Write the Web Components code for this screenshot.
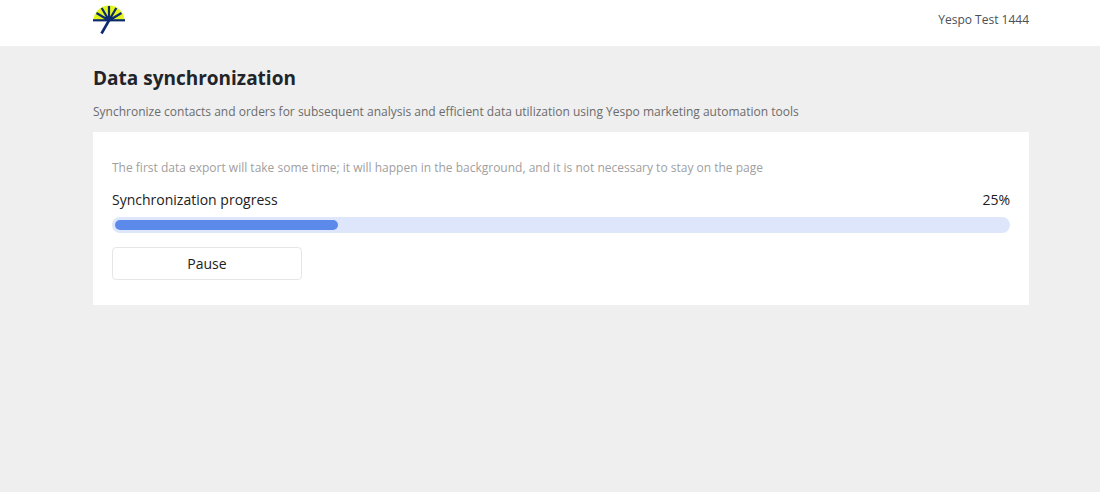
<!DOCTYPE html>
<html lang="en">
<head>
<meta charset="utf-8">
<title>Data synchronization</title>
<style>
  body {
    margin: 0;
    background: #efefef;
    color: #212529;
    font: 12px/20px "Open Sans", "Noto Sans", sans-serif;
  }
</style>
</head>
<body>
<sync-page>
  <app-header slot="header">Yespo Test 1444</app-header>
  <page-intro>
    <span slot="title">Data synchronization</span>
    Synchronize contacts and orders for subsequent analysis and efficient data utilization using Yespo marketing automation tools
  </page-intro>
  <sync-card value="25">
    <span slot="note">The first data export will take some time; it will happen in the background, and it is not necessary to stay on the page</span>
    <span slot="label">Synchronization progress</span>
    <sync-button>Pause</sync-button>
  </sync-card>
</sync-page>
<script>
  function define(name, html, ready) {
    const template = document.createElement('template');
    template.innerHTML = html;
    customElements.define(name, class extends HTMLElement {
      constructor() {
        super();
        this.attachShadow({ mode: 'open' }).append(template.content.cloneNode(true));
      }
      connectedCallback() {
        if (ready) ready(this);
      }
    });
  }

  define('yespo-logo', `
    <style>
      :host { display: block; width: 32px; height: 30px; }
      svg { display: block; }
    </style>
    <svg width="32" height="30" viewBox="0 0 32 30" role="img" aria-label="Yespo">
      <path d="M0.5 15.5A15.5 15 0 0 1 31.5 15.5Z" fill="#e3f51c"/>
      <g stroke="#0c2a70" stroke-width="2.2" fill="none">
        <path d="M0 15.3H32"/>
        <path d="M16 15.5L3.500 8M16 15.5L8.700 3M16 15.500V1M16 15.500L23.300 3M16 15.500L28.500 8"/>
        <path d="M16.500 14.500L8.500 28.500" stroke-width="2.600"/>
      </g>
      <path d="M12 15.500A4 4 0 0 1 20 15.500Z" fill="#0c2a70"/>
    </svg>`);

  define('app-header', `
    <style>
      :host { display: block; background: #fff; }
      header {
        display: flex; justify-content: space-between; align-items: center;
        box-sizing: border-box; min-height: 46px;
        padding: 0 71px 6px 93px;
        color: #495057;
      }
    </style>
    <header><yespo-logo></yespo-logo><span><slot></slot></span></header>`);

  define('page-intro', `
    <style>
      :host { display: block; color: #6c6c6c; }
      h1 { margin: 0 0 12px; font-size: 19px; line-height: 24px; font-weight: 700; color: #212529; }
      p { margin: 0; }
    </style>
    <h1><slot name="title"></slot></h1>
    <p><slot></slot></p>`);

  define('sync-button', `
    <style>
      :host { display: block; }
      button {
        display: block; box-sizing: border-box; width: 190px; height: 33px; padding: 0;
        border: 1px solid #e6e6e6; border-radius: 4px; background: #fff;
        color: #212121; font: inherit; font-size: 14px;
      }
    </style>
    <button type="button"><slot></slot></button>`);

  define('sync-card', `
    <style>
      :host { display: block; padding: 26px 19px 25px; background: #fff; color: #212121; }
      .note { margin: 0; color: #a0a0a0; }
      .row {
        display: flex; justify-content: space-between;
        margin: 12px 0 7px; font-size: 14px;
      }
      .track {
        height: 10px; padding: 3px; margin-bottom: 14px;
        border-radius: 8px; background: #dee6fb;
      }
      .bar { height: 100%; border-radius: 5px; background: #5c8aea; }
    </style>
    <p class="note"><slot name="note"></slot></p>
    <div class="row"><span id="label"><slot name="label"></slot></span><span class="percent"></span></div>
    <div class="track" role="progressbar" aria-labelledby="label" aria-valuemin="0" aria-valuemax="100"><div class="bar"></div></div>
    <slot></slot>`,
    host => {
      const value = host.getAttribute('value');
      host.shadowRoot.querySelector('.percent').textContent = value + '%';
      host.shadowRoot.querySelector('.bar').style.width = value + '%';
      host.shadowRoot.querySelector('.track').setAttribute('aria-valuenow', value);
    });

  define('sync-page', `
    <style>
      :host { display: block; }
      main { display: grid; gap: 10px; padding: 20px 71px 20px 93px; }
    </style>
    <slot name="header"></slot>
    <main><slot></slot></main>`);
</script>
</body>
</html>
